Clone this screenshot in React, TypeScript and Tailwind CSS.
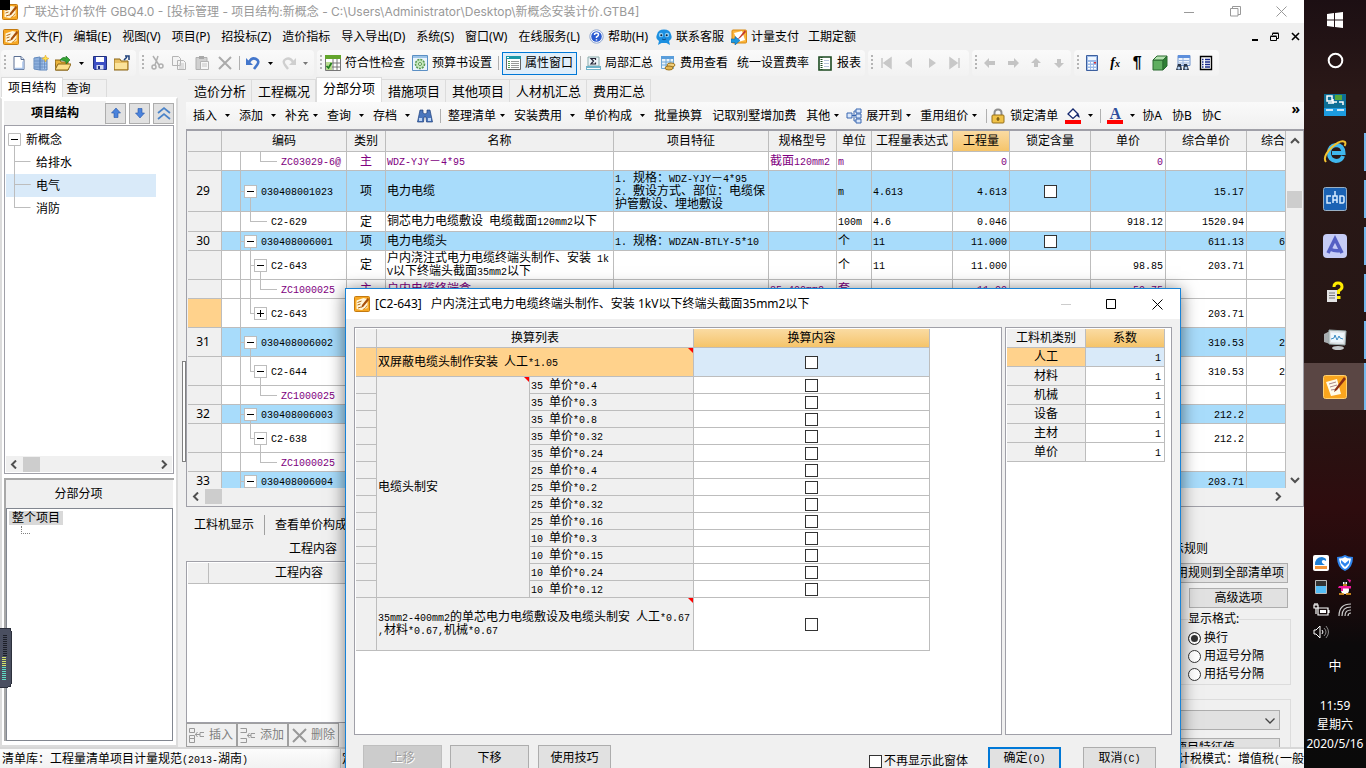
import type { ReactNode } from 'react'

const CHECK = 'appearance-none shrink-0 size-[13px] border border-[#333] bg-white block'
const MONO = "font-['Liberation_Mono','Noto_Sans_CJK_SC',monospace] text-[10px] leading-none"

export default function App() {
  return (
    <div className="relative flex h-screen w-full overflow-hidden bg-[#f0f0f0] text-xs leading-4 text-black font-['Noto_Sans','Noto_Sans_CJK_SC',sans-serif] whitespace-nowrap">
      <div className="flex min-w-0 flex-1 flex-col">
        <TitleBar />
        <MenuBar />
        <MainToolbar />
        <div className="flex min-h-0 flex-1">
          <ProjectPanel />
          <div className="flex w-2 shrink-0 items-center justify-end pb-[2px]">
            <div className="h-[101px] w-1 border border-[#808080] bg-white" />
          </div>
          <main className="flex min-w-0 flex-1 flex-col">
            <Tabs />
            <EditToolbar />
            <BillTable />
            <DetailPanel />
          </main>
        </div>
        <StatusBar />
      </div>
      <Taskbar />
      <ConversionDialog />
      <Meter />
      <div className="absolute left-0 top-0 size-[10px] bg-black" />
    </div>
  )
}

function TitleBar() {
  return (
    <header className="flex h-[23px] shrink-0 items-center bg-white pl-[2px] text-[#999]">
      <AppIcon />
      <h1 className="ml-[5px] flex-1 font-['Inter','Noto_Sans_CJK_SC',sans-serif]">广联达计价软件 GBQ4.0 - [投标管理 - 项目结构:新概念 - C:\Users\Administrator\Desktop\新概念安装计价.GTB4]</h1>
      <button aria-label="最小化" className="flex w-[46px] justify-center"><svg width="10" height="10" stroke="#999"><path d="M0 5.5h10" /></svg></button>
      <button aria-label="还原" className="flex w-[46px] justify-center"><svg width="11" height="11" fill="none" stroke="#999"><path d="M.5 2.5h7.5v7.500h-7.500zM2.500 2.500v-2h8v8h-2.500" /></svg></button>
      <button aria-label="关闭" className="flex w-[46px] justify-center"><svg width="11" height="11" stroke="#999"><path d="M.5.5l10 10M10.500.5l-10 10" /></svg></button>
    </header>
  )
}

function MenuBar() {
  return (
    <nav className="flex h-[27px] shrink-0 items-center gap-[11px] pl-[3px]">
      <span className="-mr-[5px]"><AppIcon /></span>
      {['文件(F)', '编辑(E)', '视图(V)', '项目(P)', '招投标(Z)', '造价指标', '导入导出(D)', '系统(S)', '窗口(W)', '在线服务(L)'].map(m => (
        <button key={m}>{m}</button>
      ))}
      <button className="-ml-[2px] flex items-center gap-1">
        <svg width="15" height="15" viewBox="0 0 15 15"><circle cx="7.500" cy="7.500" r="6.700" fill="#fff" stroke="#8fa6cf" /><circle cx="7.500" cy="7.500" r="5.300" fill="#2b5bd0" /><path d="M5.500 6q0-2 2-2t2 1.700q0 1.300-2 2.300v1M7.500 10.200v1.400" stroke="#fff" strokeWidth="1.500" fill="none" /></svg>
        帮助(H)
      </button>
      <button className="-ml-[3px] flex items-center gap-1">
        <svg width="16" height="16" viewBox="0 0 16 16"><path d="M3 12Q-1 10 1 5.500 2 .5 8 .5t7 5Q17 10 13 12l1 4-3.500-2h-5L2 16z" fill="#1b8fe0" /><circle cx="5" cy="6" r="2.200" fill="#8fd0f8" /><circle cx="11" cy="6" r="2.200" fill="#8fd0f8" /><circle cx="5.300" cy="6.200" r="1" fill="#123" /><circle cx="10.700" cy="6.200" r="1" fill="#123" /><path d="M6 10q2 1.500 4 0" stroke="#0b4f8c" fill="none" /></svg>
        联系客服
      </button>
      <button className="-ml-1 flex items-center gap-1">
        <svg width="16" height="16" viewBox="0 0 16 16"><rect x="1" y="1" width="14.500" height="13" rx="1" fill="#fbb53c" stroke="#d98a12" /><path d="M3 4l8-2 3 9-7 2z" fill="#fff" /><path d="M14 1L8 8.500l-2 2 3-1.500L15 3z" fill="#c2382b" /><path d="M0 10h4V7.500l5 4-5 4.500v-2.500H0z" fill="#1c98e0" stroke="#0c63a8" strokeWidth=".6" /></svg>
        计量支付
      </button>
      <button className="-ml-[2px]">工期定额</button>
      <div className="ml-auto flex items-center gap-[11px] pr-1">
        <button aria-label="子窗口最小化"><svg width="7" height="10"><path d="M0 7h6v2H0z" /></svg></button>
        <button aria-label="子窗口还原"><svg width="10" height="10" fill="none" stroke="#000"><path d="M2.500 3V1.500h6v5H7M.5 4.500h6v4h-6zM2.500 1h6M.5 4h6" /></svg></button>
        <button aria-label="子窗口关闭"><svg width="9" height="9" stroke="#000" strokeWidth="1.600"><path d="M1 1l7 7M8 1L1 8" /></svg></button>
      </div>
    </nav>
  )
}

function Group({ children }: { children: ReactNode }) {
  return (
    <div className="flex h-[26px] items-center rounded-sm bg-gradient-to-b from-[#fafafa] to-[#f2f2f2] pl-[3px]">
      <svg width="3" height="16" className="mr-1" fill="#b4b4b4"><path d="M0 0h2v2H0zM0 4h2v2H0zM0 8h2v2H0zM0 12h2v2H0z" /></svg>
      {children}
    </div>
  )
}

function Caret({ gray }: { gray?: boolean }) {
  return <svg width="6" height="3" className="shrink-0" fill={gray ? '#777' : '#000'}><path d="M0 0h5L2.500 3z" /></svg>
}

function Sep() {
  return <div className="h-[14px] w-px shrink-0 bg-[#b0b0b0]" />
}

function IconButton({ label, children }: { label: string; children: ReactNode }) {
  return (
    <button aria-label={label} className="flex size-4 shrink-0 items-center justify-center">
      <svg width="16" height="16" viewBox="0 0 16 16">{children}</svg>
    </button>
  )
}

function MainToolbar() {
  return (
    <div className="flex h-[27px] shrink-0 items-center gap-[3px] pl-[1px] pb-[1px]">
      <Group>
        <IconButton label="新建"><path d="M3 1.500h7l3 3v10H3z" fill="#fff" stroke="#5b6f93" /><path d="M4 13.500h8v-7" stroke="#a9c4ea" fill="none" strokeWidth="1.500" /><path d="M10 1.500v3h3" fill="#dce8f8" stroke="#5b6f93" /></IconButton>
        <div className="w-[6px]" />
        <IconButton label="新建项目"><path d="M1 3l6-1v13l-6-1zM7 3h7v12H7z" fill="#a8c6ee" stroke="#5e86bb" /><path d="M3 3v11M5 3v11M9 4v10M11.500 4v10M1 6h13M1 9h13M1 12h13" stroke="#5e86bb" strokeWidth=".7" /><path d="M12.500 0l1 2.500L16 3.500l-2.500 1-1 2.500-1-2.500-2.500-1 2.500-1z" fill="#ffe24a" stroke="#e8a92a" strokeWidth=".6" /></IconButton>
        <div className="w-[6px]" />
        <IconButton label="打开"><path d="M0 5h5l1 2h7v8H1z" fill="#e9b33b" stroke="#8a6414" /><path d="M3 9h13l-3 6H0z" fill="#fde08a" stroke="#8a6414" /><path d="M5 5q3-4 6-2V1l4 4-4 4V6.500Q8 5 5 5z" fill="#35a636" stroke="#176b1a" strokeWidth=".6" /></IconButton>
        <span className="flex w-[21px] justify-center"><Caret /></span>
        <IconButton label="保存"><path d="M1.500 1.500h13v13h-12l-1-1z" fill="#3c4fc4" stroke="#20307f" /><path d="M4 2h8v5H4z" fill="#fff" /><path d="M4.500 10h7v4.500h-7z" fill="#d6dcf0" /><path d="M6 11h2v3H6z" fill="#20307f" /></IconButton>
        <div className="w-[6px]" />
        <IconButton label="关闭项目"><path d="M0 4h6l1 2h7v9H0z" fill="#e9c063" stroke="#8a6414" /><path d="M1 8h12v6H1z" fill="#fbe39a" /><path d="M10 5l3-3M11 1h4v4" stroke="#1d3f7a" strokeWidth="1.500" fill="none" /></IconButton>
        <div className="w-[6px]" />
      </Group>
      <Group>
        <IconButton label="剪切"><path d="M4 1l6 9M9 1L6 10" stroke="#b0b0b0" strokeWidth="1.500" /><g fill="none" stroke="#b0b0b0" strokeWidth="1.500"><circle cx="5" cy="12" r="2" /><circle cx="12" cy="11" r="2" /></g></IconButton>
        <div className="w-[6px]" />
        <IconButton label="复制"><path d="M1.500 1.500h6l2 2v7h-8zM6.500 5.500h6l2 2v7h-8z" fill="#f4f4f4" stroke="#b4b4b4" /><path d="M8 9h5M8 11h5M8 13h5" stroke="#c4c4c4" /></IconButton>
        <div className="w-[7px]" />
        <IconButton label="粘贴"><path d="M2 2.500h11v12H2z" fill="#d0d0d0" stroke="#b0b0b0" /><path d="M5 1h5v3H5z" fill="#a8a8a8" /><path d="M6.500 6.500h8v8h-8z" fill="#f6f6f6" stroke="#b4b4b4" /><path d="M8 9h5M8 11h5" stroke="#c4c4c4" /></IconButton>
        <div className="w-[7px]" />
        <IconButton label="删除"><path d="M2 2l12 12M14 2L2 14" stroke="#ababab" strokeWidth="2" /></IconButton>
        <div className="w-[6px]" />
        <Sep />
        <div className="w-[5px]" />
        <IconButton label="撤销"><path d="M4 7q3-5 7-3t1 6-3 4" stroke="#4477cc" strokeWidth="2.600" fill="none" /><path d="M1 3v7h7z" fill="#4477cc" /></IconButton>
        <span className="flex w-[20px] justify-center"><Caret /></span>
        <IconButton label="重做"><path d="M12 7Q9 2 5 4t-1 6 3 4" stroke="#cfcfcf" strokeWidth="2.400" fill="none" /><path d="M15 3v7H8z" fill="#cfcfcf" /></IconButton>
        <span className="flex w-[17px] justify-center"><Caret gray /></span>
      </Group>
      <Group>
        <button className="-ml-[2px] flex items-center gap-1">
          <svg width="16" height="16"><path d="M.5 .5h15v15H.5z" fill="#fff" stroke="#777" /><path d="M0 0h16v4H0z" fill="#63a52c" /><path d="M1 8h15M1 12h15M8 4v12M12 4v12" stroke="#777" /><path d="M1 7h6v8H1z" fill="#b9dc90" /><path d="M1.500 11l2 2 3-5" stroke="#1b7a1b" strokeWidth="1.700" fill="none" /></svg>
          符合性检查
        </button>
        <button className="ml-[7px] flex items-center gap-1">
          <svg width="16" height="16"><path d="M.5.5h15v15H.5z" fill="#eaf4fc" stroke="#5b8fc4" /><path d="M1 1h14v2H1z" fill="#9cc4e8" /><circle cx="8" cy="9" r="4.500" fill="#c8e8c0" stroke="#5a9a50" strokeDasharray="2 1" strokeWidth="1.600" /><circle cx="8" cy="9" r="1.500" fill="#fff" stroke="#5a9a50" /></svg>
          预算书设置
        </button>
        <div className="w-[6px]" />
        <Sep />
        <button className="ml-[3px] flex h-[23px] items-center gap-1 border border-[#0078d7] bg-[#e0eefa] px-[3px]">
          <svg width="15" height="14"><path d="M.5.500h14v13H.5z" fill="#fff" stroke="#666" /><path d="M0 0h15v3H0z" fill="#1b98a8" /><path d="M1 1h2v1H1z" fill="#fff" /><path d="M2 5.500h2M2 7.500h2M2 9.500h2M2 11.500h2" stroke="#4d9e4d" /><path d="M5 5.500h8M5 7.500h8M5 9.500h8M5 11.500h8" stroke="#999" /></svg>
          属性窗口
        </button>
        <div className="w-[3px]" />
        <Sep />
        <button className="ml-[5px] flex items-center gap-1">
          <svg width="15" height="14"><path d="M2 1h11v9H2z" fill="#eef4f8" stroke="#8aa" /><path d="M0 10h15v4H0z" fill="#6fb2c8" /><path d="M1 12.500h13" stroke="#fff" /><path d="M9.500 4V2.500H5L7.500 5 5 8h4.500V6.500" stroke="#223" fill="none" strokeWidth="1.200" /></svg>
          局部汇总
        </button>
        <button className="ml-[8px] flex items-center gap-1">
          <svg width="15" height="15"><path d="M.5.500h12v12H.5z" fill="#e9f3fb" stroke="#6da6d6" /><path d="M0 0h13v3H0z" fill="#5a9edb" /><path d="M1 6h11M1 9h11M5 3v10M9 3v10" stroke="#6da6d6" /><ellipse cx="10" cy="9" rx="4" ry="2" fill="#f0cf7c" stroke="#9e7420" /><ellipse cx="8" cy="12" rx="4" ry="2" fill="#e3b550" stroke="#9e7420" /></svg>
          费用查看
        </button>
        <button className="ml-[9px]">统一设置费率</button>
        <button className="ml-[9px] mr-[4px] flex items-center gap-[5px]">
          <svg width="14" height="15"><path d="M1 1h12v13H1z" fill="#fff" stroke="#1c4a20" strokeWidth="1.600" /><path d="M3.500 1v13" stroke="#1c4a20" strokeDasharray="1 1" strokeWidth="2" /><path d="M6 4.500h5M6 7.500h5M6 10.500h5" stroke="#b8c4dc" /></svg>
          报表
        </button>
      </Group>
      <Group>
        <IconButton label="首条"><path d="M4 3v10M13 3v10L6 8z" fill="#c8c8c8" stroke="#c8c8c8" strokeWidth="1.500" /></IconButton>
        <div className="w-[7px]" />
        <IconButton label="上一条"><path d="M11 3v10L4 8z" fill="#c8c8c8" /></IconButton>
        <div className="w-[7px]" />
        <IconButton label="下一条"><path d="M5 3v10l7-5z" fill="#c8c8c8" /></IconButton>
        <div className="w-[7px]" />
        <IconButton label="末条"><path d="M12 3v10M3 3v10l7-5z" fill="#c8c8c8" stroke="#c8c8c8" strokeWidth="1.500" /></IconButton>
        <div className="w-[6px]" />
      </Group>
      <Group>
        <IconButton label="左移"><path d="M2 8l5-5v3h6v4H7v3z" fill="#c4c4c4" /></IconButton>
        <div className="w-[7px]" />
        <IconButton label="右移"><path d="M14 8L9 3v3H3v4h6v3z" fill="#c4c4c4" /></IconButton>
        <div className="w-[7px]" />
        <IconButton label="上移一行"><path d="M8 3l5 5h-3v4H6V8H3z" fill="#c4c4c4" /></IconButton>
        <div className="w-[7px]" />
        <IconButton label="下移一行"><path d="M8 13l5-5h-3V4H6v4H3z" fill="#c4c4c4" /></IconButton>
        <div className="w-[4px]" />
      </Group>
      <Group>
        <IconButton label="计算器"><path d="M2.500.5h11v15h-11z" fill="#9dbbe8" stroke="#3c5f9e" /><path d="M4 2h8v3H4z" fill="#eef6ff" /><g fill="#fff"><path d="M4 7h2v1.500H4zM7 7h2v1.500H7zM4 10h2v1.500H4zM7 10h2v1.500H7zM4 13h2v1.500H4zM7 13h2v1.500H7zM10 10h2v1.500h-2zM10 13h2v1.500h-2z" /></g><path d="M10 7h2v1.500h-2z" fill="#e03030" /></IconButton>
        <div className="w-[7px]" />
        <button aria-label="函数" className="w-4 text-center text-sm font-bold italic font-['Liberation_Serif',serif]">f<span className="text-[10px]">x</span></button>
        <div className="w-[6px]" />
        <button aria-label="段落" className="w-4 text-center text-base font-bold font-['Liberation_Sans',sans-serif]">¶</button>
        <div className="w-[7px]" />
        <IconButton label="立方体"><path d="M1 5h10v10H1z" fill="#5fae60" stroke="#2b6b30" /><path d="M1 5l4-4h10l-4 4z" fill="#b4e2b0" stroke="#2b6b30" /><path d="M11 5l4-4v10l-4 4z" fill="#2f7f36" stroke="#2b6b30" /></IconButton>
        <div className="w-[7px]" />
        <IconButton label="查找"><path d="M3 .5h12v10H3z" fill="#eef4fc" stroke="#6b8fc9" /><path d="M3 0h12v3H3z" fill="#5d8fdc" /><path d="M4 5.500h10M4 8h10M8 3v7" stroke="#9ab4dd" /><path d="M3 9h3l1 6H1zM9 9h3l2 6H8z" fill="#273449" /><circle cx="3.800" cy="13" r="1.500" fill="#b8d4f4" /><circle cx="11" cy="13" r="1.500" fill="#b8d4f4" /></IconButton>
        <div className="w-[7px]" />
        <IconButton label="列表"><path d="M2.500 1.500h11v13h-11z" fill="#fff" stroke="#000" strokeWidth="1.400" /><path d="M4 4.500h1.500M7 4.500h5M4 7h1.500M7 7h5M4 9.500h1.500M7 9.500h5M4 12h1.500M7 12h5" stroke="#1a2a8c" strokeWidth="1.400" /></IconButton>
        <div className="w-[5px]" />
      </Group>
    </div>
  )
}

function ProjectPanel() {
  return (
    <aside className="flex w-[178px] shrink-0 flex-col">
      <div className="flex h-5 items-end pl-px">
        <button className="h-5 w-[62px] border border-b-0 border-[#dcdcdc] bg-white">项目结构</button>
        <button className="h-[18px] w-11 border border-b-0 border-l-0 border-[#dcdcdc] pr-3">查询</button>
      </div>
      <div className="flex min-h-0 flex-1 flex-col border-2 border-[#dcdcdc] border-t-white bg-white px-[2px] pb-1">
        <div className="flex h-[26px] shrink-0 items-center gap-[3px] pt-[2px]">
          <h2 className="flex h-full flex-1 items-center justify-center bg-[#f0f0f0] font-bold">项目结构</h2>
          <button aria-label="上移节点" className="-ml-1 flex size-[21px] items-center justify-center border border-[#adadad] bg-[#e1e1e1]"><svg width="10" height="10"><path d="M5 0l4.500 5H7v4.500H3V5H.5z" fill="#4b83dc" stroke="#2756a8" strokeWidth=".6" /></svg></button>
          <button aria-label="下移节点" className="flex size-[21px] items-center justify-center border border-[#adadad] bg-[#e1e1e1]"><svg width="10" height="10"><path d="M5 10L.5 5H3V.5h4V5h2.500z" fill="#4b83dc" stroke="#2756a8" strokeWidth=".6" /></svg></button>
          <button aria-label="收起" className="flex size-[21px] items-center justify-center border border-[#adadad] bg-[#e1e1e1]"><svg width="14" height="14" fill="none" stroke="#4a83c8" strokeWidth="1.700"><path d="M1 7l6-5 6 5M1 13l6-5 6 5" /></svg></button>
        </div>
        <div className="flex min-h-0 flex-[350] flex-col border border-[#a0a0a8] p-px">
          <ul className="relative flex-1 pt-px leading-[23px]">
            <svg width="30" height="84" className="absolute left-0 top-0" fill="none" stroke="#bdbdbd"><path d="M8.500 19v62M8.500 34.500h16M8.500 57.500h16M8.500 80.500h16" /><path d="M2.500 6.500h12v12h-12z" fill="#fff" /><path d="M5 12.500h7" stroke="#000" /></svg>
            <li className="pl-5">新概念</li>
            <li className="pl-[30px]">给排水</li>
            <li className="mr-4 bg-[#d9eaf9] pl-[30px]">电气</li>
            <li className="pl-[30px]">消防</li>
            <svg width="30" height="84" className="absolute left-0 top-0" stroke="#bdbdbd"><path d="M8.500 46v26M8.500 57.500h16" /></svg>
          </ul>
          <HScroll />
        </div>
        <div className="mt-1 flex min-h-0 flex-[264] flex-col border-l-2 border-t-2 border-[#a8a8a8] pr-px">
          <h2 className="shrink-0 bg-[#f0f0f0] pr-[22px] text-center leading-7">分部分项</h2>
          <div className="flex-1 border border-[#828790] px-[2px] py-px">
            <span className="inline-block bg-[#d9d9d9] px-[3px] leading-[14px]">整个项目</span>
            <div className="ml-3 h-2 w-[9px] border-b border-l border-dotted border-[#808080]" />
          </div>
        </div>
      </div>
    </aside>
  )
}

function HScroll() {
  return (
    <div className="flex h-4 shrink-0 items-center bg-[#f0f0f0]">
      <svg width="17" height="9" fill="none" stroke="#505050" strokeWidth="2"><path d="M10 .5l-4 4 4 4" /></svg>
      <div className="h-[15px] w-[17px] bg-[#cdcdcd]" />
      <svg width="17" height="9" className="ml-auto" fill="none" stroke="#505050" strokeWidth="2"><path d="M7 .5l4 4-4 4" /></svg>
    </div>
  )
}

function Tabs() {
  const tabs = ['造价分析', '工程概况', '分部分项', '措施项目', '其他项目', '人材机汇总', '费用汇总']
  return (
    <div className="flex h-[25px] shrink-0 items-end pl-[2px] text-[13px]">
      {tabs.map(t => (
        <button key={t} className={t === '分部分项' ? 'h-[25px] border border-b-0 border-[#dcdcdc] bg-white px-[6px] pb-1' : 'h-[23px] border-r border-t border-[#dcdcdc] px-[5px] pl-[6px]'}>{t}</button>
      ))}
    </div>
  )
}

function Cmd({ label, wide }: { label: string; wide?: boolean }) {
  return (
    <button className="flex shrink-0 items-center">
      {label}
      <span className={wide ? 'flex w-[22px] justify-center' : 'flex w-[18px] justify-center pr-1'}><Caret /></span>
    </button>
  )
}

function EditToolbar() {
  return (
    <div className="flex h-[27px] shrink-0 items-center bg-gradient-to-b from-[#fafafa] to-[#f0f0f0] pl-[7px]">
      <Cmd label="插入" wide />
      <Cmd label="添加" wide />
      <Cmd label="补充" />
      <Cmd label="查询" wide />
      <Cmd label="存档" wide />
      <span className="-ml-[2px]"><IconButton label="查找"><path d="M3 2h3v3l2 1 2-1V2h3l2.500 12h-6L9 9H7l-.5 5h-6z" fill="#4a76bd" stroke="#1f3f7a" strokeWidth=".7" /><path d="M2 10h3v3H2zM11 10h3v3h-3z" fill="#bcd4f4" /></IconButton></span>
      <div className="w-[7px]" />
      <Sep />
      <div className="w-[7px]" />
      <Cmd label="整理清单" />
      <Cmd label="安装费用" wide />
      <Cmd label="单价构成" wide />
      <button>批量换算</button>
      <button className="mx-[10px]">记取别墅增加费</button>
      <Cmd label="其他" />
      <span className="mr-1 -ml-[2px]"><IconButton label="层级"><path d="M1 5h5v5H1zM10 1h5v4h-5zM10 6h5v4h-5zM10 11h5v4h-5z" fill="#dbe8fb" stroke="#3966b0" /><path d="M6 7.500h4M8 3v10h2M8 3h2" stroke="#3966b0" fill="none" /></IconButton></span>
      <Cmd label="展开到" />
      <Cmd label="重用组价" />
      <Sep />
      <button className="ml-1 flex shrink-0 items-center gap-[5px]">
        <svg width="14" height="16"><path d="M3.500 8V5q0-3.500 3.500-3.500T10.500 5v3" fill="none" stroke="#8f8f8f" strokeWidth="2" /><rect x="1" y="7" width="12" height="8" rx="1" fill="#f0c248" stroke="#96701a" /><path d="M7 9v4M5.500 11h3" stroke="#7a5a10" strokeWidth="1.400" /></svg>
        锁定清单
      </button>
      <span className="ml-[7px]"><IconButton label="填充颜色"><path d="M3 6l5-5 5 5-5 4.500z" fill="#fff" stroke="#14286e" strokeWidth="1.300" /><path d="M12 5q3 2 2.500 5L12 8z" fill="#14286e" /><path d="M0 12h16v4H0z" fill="#f00" /></IconButton></span>
      <span className="flex w-[19px] shrink-0 justify-center"><Caret /></span>
      <Sep />
      <button aria-label="字体颜色" className="ml-[6px] h-4 w-4 shrink-0 border-b-4 border-[#f00] text-center text-base leading-[11px] font-bold text-[#2f4f9e] font-['Liberation_Serif',serif]">A</button>
      <span className="flex w-[19px] shrink-0 justify-center"><Caret /></span>
      <button className="mr-[10px]">协A</button>
      <button className="mr-[10px]">协B</button>
      <button>协C</button>
      <button className="ml-auto self-start pr-1 text-sm leading-[13px] font-bold">»</button>
    </div>
  )
}

type Row = {
  n?: string
  h: string
  code: string
  level: 1 | 2 | 3
  open?: '-' | '+'
  more?: boolean
  sel?: boolean
  cells: string[]
}

// cells: 类别 名称 项目特征 规格型号 单位 工程量表达式 工程量 锁定含量 单价 综合单价 综合合价
const rows: Row[] = [
  { h: 'h-[19px]', code: 'ZC03029-6@', level: 3, cells: ['主', 'WDZ-YJY－4*95', '', '截面120mm2', 'm', '', '0', '', '0', '', ''] },
  { n: '29', h: 'h-[41px]', code: '030408001023', level: 1, open: '-', cells: ['项', '电力电缆', '1. 规格：WDZ-YJY－4*95\n2. 敷设方式、部位：电缆保\n护管敷设、埋地敷设', '', 'm', '4.613', '4.613', 'x', '', '15.17', ''] },
  { h: 'h-[20px]', code: 'C2-629', level: 2, cells: ['定', '铜芯电力电缆敷设 电缆截面120mm2以下', '', '', '100m', '4.6', '0.046', '', '918.12', '1520.94', ''] },
  { n: '30', h: 'h-[19px]', code: '030408006001', level: 1, open: '-', cells: ['项', '电力电缆头', '1. 规格：WDZAN-BTLY-5*10', '', '个', '11', '11.000', 'x', '', '611.13', '6'] },
  { h: 'h-[29px]', code: 'C2-643', level: 2, open: '-', more: true, cells: ['定', '户内浇注式电力电缆终端头制作、安装 1k\nV以下终端头截面35mm2以下', '', '', '个', '11', '11.000', '', '98.85', '203.71', ''] },
  { h: 'h-[19px]', code: 'ZC1000025', level: 3, more: true, cells: ['主', '户内电缆终端盒', '', '35~400mm2', '套', '', '11.00', '', '59.75', '', ''] },
  { h: 'h-[29px]', code: 'C2-643', level: 2, open: '+', sel: true, cells: ['', '', '', '', '', '', '', '', '', '203.71', ''] },
  { n: '31', h: 'h-[29px]', code: '030408006002', level: 1, open: '-', cells: ['', '', '', '', '', '', '', '', '', '310.53', '2'] },
  { h: 'h-[29px]', code: 'C2-644', level: 2, open: '-', cells: ['', '', '', '', '', '', '', '', '', '310.53', '2'] },
  { h: 'h-[19px]', code: 'ZC1000025', level: 3, cells: ['', '', '', '', '', '', '', '', '', '', ''] },
  { n: '32', h: 'h-[19px]', code: '030408006003', level: 1, open: '-', cells: ['', '', '', '', '', '', '', '', '', '212.2', ''] },
  { h: 'h-[29px]', code: 'C2-638', level: 2, open: '-', cells: ['', '', '', '', '', '', '', '', '', '212.2', ''] },
  { h: 'h-[19px]', code: 'ZC1000025', level: 3, cells: ['', '', '', '', '', '', '', '', '', '', ''] },
  { n: '33', h: 'h-[19px]', code: '030408006004', level: 1, open: '-', cells: ['', '', '', '', '', '', '', '', '', '203.71', ''] },
]

const aligns = ['text-center', 'pl-px', 'pl-px', 'pl-px', 'pl-px', 'pl-px', 'pr-[2px] text-right', '', 'pr-[2px] text-right', 'pr-[2px] text-right', 'text-right']

// half-width runs are set in a 6px wide mono face, so that two of them take one han cell
function Mixed({ text }: { text: string }) {
  return (
    <>
      {text.split(/([ -~]+)/).map((part, i) => (
        i % 2 ? <span key={i} className={MONO}>{part}</span> : part
      ))}
    </>
  )
}

function TreeLines({ row }: { row: Row }) {
  const x = row.level === 1 ? 28 : 38
  const stem = row.level === 1 ? 18 : row.level === 2 ? 28 : 38
  return (
    <svg className="absolute inset-0 h-full w-full" stroke="#bdbdbd" shapeRendering="crispEdges">
      <line x1="18.500" y1="0" x2="18.500" y2="100%" />
      {row.level === 3 && row.more && <line x1="28.500" y1="0" x2="28.500" y2="100%" />}
      {row.level > 1 && <line x1={stem + 0.5} y1="0" x2={stem + 0.5} y2={row.more && row.level === 2 ? '100%' : '50%'} />}
      <line x1={stem} y1="50%" x2={row.open ? x - 4 : stem + 17} y2="50%" />
      {row.open === '-' && <line x1={x + 0.5} y1="50%" x2={x + 0.5} y2="100%" />}
      {row.open && (
        <svg x={x - 6} y="50%" width="14" height="14" overflow="visible">
          <rect x=".5" y="-6" width="12" height="12" fill="#fff" />
          <path d={row.open === '+' ? 'M3 0h7M6.500 -3.500v7' : 'M3 0h7'} stroke="#000" />
        </svg>
      )}
    </svg>
  )
}

function BillTable() {
  const heads = ['', '编码', '类别', '名称', '项目特征', '规格型号', '单位', '工程量表达式', '工程量', '锁定含量', '单价', '综合单价', '综合']
  return (
    <section className="flex min-h-0 flex-[377] border border-t-2 border-[#a0a0a8] bg-[#f0f0f0] pl-px font-['Liberation_Sans','Noto_Sans_CJK_SC',sans-serif]">
      <div className="flex min-w-0 flex-1 flex-col">
        <div className="min-h-0 flex-1 overflow-hidden bg-white">
          <table className="w-[1098px] table-fixed border-separate border-spacing-0 leading-3">
            <colgroup>
              <col className="w-[34px]" /><col className="w-[125px]" /><col className="w-[39px]" /><col className="w-[228px]" />
              <col className="w-[155px]" /><col className="w-[68px]" /><col className="w-[35px]" /><col className="w-[81px]" />
              <col className="w-[57px]" /><col className="w-[81px]" /><col className="w-[75px]" /><col className="w-[81px]" /><col className="w-[39px]" />
            </colgroup>
            <thead>
              <tr className="h-[21px]">
                {heads.map((h, i) => (
                  <th key={i} className={`border-b border-r border-[#bdbdbd] p-0 font-normal ${h === '工程量' ? 'bg-gradient-to-b from-[#fadba2] to-[#f5c469]' : 'bg-[#f0f0f0]'} ${i === 12 ? 'text-right' : ''}`}>{h}</th>
                ))}
              </tr>
            </thead>
            <tbody>
              {rows.map((r, i) => (
                <tr key={i} className={`${r.h} ${r.level === 1 ? 'bg-[#a8dcfb]' : 'bg-white'} ${r.level === 3 ? 'text-[#800080]' : ''}`}>
                  <td className={`border-b border-r border-[#bdbdbd] p-0 pr-[3px] text-center font-['Noto_Sans',sans-serif] ${r.sel ? 'bg-[#ffd28c]' : 'bg-[#f0f0f0]'}`}>{r.n}</td>
                  <td className="relative border-b border-r border-[#bdbdbd] p-0">
                    <TreeLines row={r} />
                    <span className={`relative ${MONO} ${r.level === 1 ? 'ml-[39px]' : r.level === 2 ? 'ml-[49px]' : 'ml-[59px]'}`}>{r.code}</span>
                  </td>
                  {r.cells.map((c, k) => (
                    <td key={k} className={`overflow-hidden whitespace-pre border-b border-r border-[#bdbdbd] p-0 ${aligns[k]}`}>
                      {c === 'x' ? <input type="checkbox" aria-label="锁定含量" className={`${CHECK} mx-auto`} /> : <Mixed text={c} />}
                    </td>
                  ))}
                </tr>
              ))}
            </tbody>
          </table>
        </div>
        <HScroll />
        <div className="h-[2px]" />
      </div>
      <div className="flex w-[17px] flex-col items-center pb-[22px] pt-[6px]">
        <svg width="10" height="7" fill="none" stroke="#505050" strokeWidth="2"><path d="M1 6l4-4 4 4" /></svg>
        <div className="mt-[47px] h-[17px] w-[15px] bg-[#cdcdcd]" />
        <svg width="10" height="7" className="mt-auto" fill="none" stroke="#505050" strokeWidth="2"><path d="M1 1l4 4 4-4" /></svg>
      </div>
    </section>
  )
}

function DetailPanel() {
  return (
    <section className="flex min-h-0 flex-[241]">
      <div className="flex min-w-0 flex-1 flex-col">
        <div className="flex items-center pl-2 pt-[8px]">
          <button>工料机显示</button>
          <div className="mx-[10px] h-5 w-px bg-[#a0a0a0]" />
          <button>查看单价构成</button>
        </div>
        <h3 className="pl-[103px] pt-[6px] leading-4">工程内容</h3>
        <div className="mt-1 flex min-h-0 flex-1 flex-col border border-[#a0a0a8] bg-white p-px">
          <div className="flex h-[21px] border-b border-[#bdbdbd] bg-[#f0f0f0] leading-5">
            <div className="w-[21px] border-r border-[#bdbdbd]" />
            <div className="pl-[66px]">工程内容</div>
          </div>
        </div>
        <div className="flex h-6 text-[#808080]">
          <button disabled className="flex w-[51px] items-center gap-1 border border-[#a0a0a0] pl-[2px]"><svg width="16" height="15" className="shrink-0" fill="none" stroke="#999"><path d="M.5.5h5v4h-5zM.5 7.500h5v3h-5zM.5 10.500h5v4h-5zM15 4.500h-4v4h4M6 6.500h5M8.500 4l-2 2.500 2 2.500" /></svg>插入</button>
          <button disabled className="flex w-[51px] items-center gap-1 border border-[#a0a0a0] pl-[2px]"><svg width="16" height="15" className="shrink-0" fill="none" stroke="#999"><path d="M.5.5h6v4h-6M.5 10.500h6v4h-6M15 5.500h-4v4h4M7 7.500h4M9.500 5l-2 2.500 2 2.500" /></svg>添加</button>
          <button disabled className="flex w-[51px] items-center gap-1 border border-[#a0a0a0] pl-[3px]"><svg width="15" height="15" className="shrink-0" stroke="#999" strokeWidth="2"><path d="M1 1l13 13M14 1L1 14" /></svg>删除</button>
        </div>
      </div>
      <div className="flex w-[150px] shrink-0 flex-col pr-4 pt-[34px]">
        <h3 className="pr-[80px] text-right">显示规则</h3>
        <button className="mt-[6px] h-5 self-end border border-[#adadad] bg-[#e1e1e1] px-[3px]">应用规则到全部清单项</button>
        <button className="mt-[5px] h-5 w-[99px] self-end border border-[#adadad] bg-[#e1e1e1]">高级选项</button>
        <fieldset className="-mr-[3px] mt-[3px] h-[74px] border border-[#dcdcdc] pl-[33px]">
          <legend className="px-0 leading-4">显示格式:</legend>
          {['换行', '用逗号分隔', '用括号分隔'].map((t, i) => (
            <label key={t} className="flex h-[18px] items-center gap-[3px] pt-1">
              <input type="radio" name="format" defaultChecked={i === 0} className="size-[13px] appearance-none rounded-full border border-[#333] bg-white checked:shadow-[inset_0_0_0_2px_#fff] checked:bg-[#333]" />
              {t}
            </label>
          ))}
        </fieldset>
        <div className="-mr-[3px] mt-[14px] flex min-h-0 flex-1 flex-col overflow-hidden border border-b-0 border-[#dcdcdc] pr-[10px] pt-[10px]">
          <div className="relative h-5 shrink-0 border border-[#adadad] bg-[#e1e1e1]">
            <select aria-label="选项" className="size-full appearance-none" />
            <svg width="10" height="6" className="absolute right-1 top-[7px]" fill="none" stroke="#444" strokeWidth="1.300"><path d="M.5.5L5 5 9.500.5" /></svg>
          </div>
          <button className="mt-2 h-5 shrink-0 border border-[#adadad] bg-[#e1e1e1] pr-[44px] text-right">项目特征值</button>
        </div>
      </div>
    </section>
  )
}

function StatusBar() {
  return (
    <footer className="flex h-[21px] shrink-0 items-center border-t-2 border-[#d7d7d7] bg-gradient-to-b from-[#fcfcfc] to-[#f2f2f2] pl-[2px]">
      <span className="w-[338px]"><Mixed text="清单库：工程量清单项目计量规范(2013-湖南)" /></span>
      <div className="mr-px h-full w-px bg-[#d0d0d0]" />
      <span className="flex-1">定</span>
      <span className="w-[136px] text-right"><Mixed text="计税模式：增值税(一般" /></span>
    </footer>
  )
}

const factors = ['35 单价*0.4', '35 单价*0.3', '35 单价*0.8', '35 单价*0.32', '35 单价*0.24', '25 单价*0.4', '25 单价*0.2', '25 单价*0.32', '25 单价*0.16', '10 单价*0.3', '10 单价*0.15', '10 单价*0.24', '10 单价*0.12']

function RedCorner() {
  return <svg width="5" height="5" className="absolute right-0 top-0"><path d="M0 0h5v5z" fill="#f00" /></svg>
}

function ConversionDialog() {
  const td = 'border-b border-r border-[#bdbdbd] p-0'
  const btn = 'h-[25px] border border-[#adadad] bg-[#e1e1e1]'
  return (
    <div role="dialog" aria-label="换算" className="absolute left-[345px] top-[288px] w-[836px] border border-[#1883d7] bg-[#f0f0f0] shadow-[0_2px_16px_rgba(0,0,0,0.55)]">
      <div className="flex h-[30px] items-center bg-white pl-2">
        <AppIcon />
        <h2 className="ml-[5px] flex flex-1 gap-[9px]"><span>[C2-643]</span><span>户内浇注式电力电缆终端头制作、安装 1kV以下终端头截面35mm2以下</span></h2>
        <button aria-label="最小化" disabled className="flex w-[45px] justify-center"><svg width="10" height="11" stroke="#ccc"><path d="M0 5.500h10" /></svg></button>
        <button aria-label="最大化" className="flex w-[46px] justify-center"><svg width="11" height="11" fill="none" stroke="#000"><path d="M.5.5h9v9h-9z" /></svg></button>
        <button aria-label="关闭" className="flex w-[46px] justify-center"><svg width="11" height="11" stroke="#000"><path d="M.5.5l10 10M10.500.5l-10 10" /></svg></button>
      </div>
      <div className="flex h-[416px] gap-[3px] px-2 pt-2 font-['Liberation_Sans','Noto_Sans_CJK_SC',sans-serif]">
        <div className="flex-1 border border-[#a0a0a8] bg-white p-px">
          <table className="w-[574px] table-fixed border-separate border-spacing-0 leading-3">
            <colgroup><col className="w-[21px]" /><col className="w-[153px]" /><col className="w-[164px]" /><col className="w-[236px]" /></colgroup>
            <thead>
              <tr className="h-[19px]">
                <th className={`${td} bg-[#f0f0f0]`} />
                <th colSpan={2} className={`${td} bg-[#f0f0f0] font-normal`}>换算列表</th>
                <th className={`${td} bg-gradient-to-b from-[#fadba2] to-[#f5c469] font-normal`}>换算内容</th>
              </tr>
            </thead>
            <tbody>
              <tr className="h-[29px] bg-[#ffd28c]">
                <td className={td} />
                <td colSpan={2} className={`${td} relative whitespace-pre pl-px`}><RedCorner /><Mixed text="双屏蔽电缆头制作安装 人工*1.05" /></td>
                <td className={`${td} bg-[#d9eaf9]`}><input type="checkbox" aria-label="双屏蔽电缆头制作安装" className={`${CHECK} mx-auto`} /></td>
              </tr>
              {factors.map((f, i) => (
                <tr key={f} className="h-[17px] bg-[#f0f0f0]">
                  <td className={td} />
                  {i === 0 && <td rowSpan={13} className={`${td} relative pl-px`}><RedCorner />电缆头制安</td>}
                  <td className={`${td} whitespace-pre pl-px`}><Mixed text={f} /></td>
                  <td className={`${td} bg-white`}><input type="checkbox" aria-label={f} className={`${CHECK} mx-auto`} /></td>
                </tr>
              ))}
              <tr className="h-[53px] bg-[#f0f0f0]">
                <td className={td} />
                <td colSpan={2} className={`${td} relative whitespace-pre pl-px`}><RedCorner /><Mixed text={'35mm2-400mm2的单芯电力电缆敷设及电缆头制安 人工*0.67\n,材料*0.67,机械*0.67'} /></td>
                <td className={`${td} bg-white`}><input type="checkbox" aria-label="单芯电力电缆敷设" className={`${CHECK} mx-auto`} /></td>
              </tr>
            </tbody>
          </table>
        </div>
        <div className="w-[167px] border border-[#a0a0a8] bg-white p-px">
          <table className="w-[158px] table-fixed border-separate border-spacing-0 leading-3">
            <thead>
              <tr className="h-[19px]">
                <th className={`${td} bg-[#f0f0f0] font-normal`}>工料机类别</th>
                <th className={`${td} bg-gradient-to-b from-[#fadba2] to-[#f5c469] font-normal`}>系数</th>
              </tr>
            </thead>
            <tbody>
              {['人工', '材料', '机械', '设备', '主材', '单价'].map((t, i) => (
                <tr key={t} className="h-[19px]">
                  <td className={`${td} text-center ${i === 0 ? 'bg-[#ffd28c]' : 'bg-[#f0f0f0]'}`}>{t}</td>
                  <td className={`${td} pr-[3px] text-right ${i === 0 ? 'bg-[#d9eaf9]' : ''}`}><Mixed text="1" /></td>
                </tr>
              ))}
            </tbody>
          </table>
        </div>
      </div>
      <div className="flex items-start pb-3 pl-[17px] pr-[24px] pt-[10px]">
        <button disabled className="h-[25px] w-[79px] border border-[#bfbfbf] bg-[#cccccc] text-[#a0a0a0] [text-shadow:1px_1px_0_#fff]">上移</button>
        <button className={`${btn} ml-2 w-[79px]`}>下移</button>
        <button className={`${btn} ml-[9px] w-[73px]`}>使用技巧</button>
        <label className="ml-auto flex items-center gap-[2px] pt-[8px]">
          <input type="checkbox" className={CHECK} />
          不再显示此窗体
        </label>
        <button className="ml-5 mt-[2px] h-[25px] w-[73px] border-2 border-[#0078d7] bg-[#e1e1e1] pb-1"><Mixed text="确定(O)" /></button>
        <button className={`${btn} ml-[22px] mt-[2px] w-[73px] pb-1`}><Mixed text="取消(C)" /></button>
      </div>
    </div>
  )
}

function Meter() {
  return (
    <svg width="12" height="60" className="absolute left-0 top-[628px]" shapeRendering="crispEdges">
      <rect x="-4" y="0" width="15" height="59" rx="3" fill="#4a4f60" stroke="#2c303c" />
      <path d="M5 7v22" stroke="#1d2029" strokeWidth="4" strokeDasharray="1 1" />
      <path d="M4 29v10" stroke="#d4e46a" strokeWidth="4" strokeDasharray="1 1" />
      <path d="M4 39v14" stroke="#5fdcc4" strokeWidth="4" strokeDasharray="1 1" />
    </svg>
  )
}

function TaskItem({ label, active, running, children }: { label: string; active?: boolean; running?: boolean; children: ReactNode }) {
  return (
    <button aria-label={label} className={`flex h-[47px] w-full shrink-0 items-center justify-center pl-[2px] ${active ? 'bg-[#5a4644]' : ''}`}>
      <svg width="24" height="24" viewBox="0 0 24 24" className="ml-auto">{children}</svg>
      <div className={`ml-auto w-[2px] ${active ? 'h-full' : 'h-[38px]'} ${running ? 'bg-[#76b9ed]' : ''}`} />
    </button>
  )
}

function Taskbar() {
  return (
    <aside className="flex w-[62px] shrink-0 flex-col items-center overflow-hidden bg-linear-[to_bottom,#1c0f13_0%,#2a1817_12%,#251614_50%,#2e0c0e_66%,#260b0d_72%,#0c0a0b_84%,#0a0a0a_100%] text-white">
      <button aria-label="开始" className="flex h-10 shrink-0 items-center"><svg width="16" height="16" fill="#fff"><path d="M0 2l7-1v6.500H0zM8 .9L16 0v7.500H8zM0 8.500h7V15l-7-1zM8 8.500h8V16l-8-1z" /></svg></button>
      <button aria-label="搜索" className="flex h-[41px] shrink-0 items-center"><svg width="17" height="17" fill="none" stroke="#fff" strokeWidth="2"><circle cx="8.500" cy="8.500" r="6.800" /></svg></button>
      <TaskItem label="投影">
        <path d="M1 1h22v14H1z" fill="#0d6f96" /><path d="M1 15h22v8H1z" fill="#1c9be0" /><path d="M4 3h5v5H4zM10 6v3h4M5 10h6M16 9h4v3" stroke="#fff" strokeWidth="1.500" fill="none" /><path d="M12 2h7v5h-7z" fill="#55a83a" /><path d="M3 17h7M14 17h7" stroke="#fff" strokeWidth="1.500" />
      </TaskItem>
      <TaskItem label="浏览器" running>
        <path d="M20 16q-1.500 5-7 5-7-1-7-8t7-8q7 0 7.500 8H9" fill="none" stroke="#3fb7ee" strokeWidth="4" /><path d="M3 22Q-1 17 9 7 18-1 22 2q1 2-.5 4" fill="none" stroke="#f2c230" strokeWidth="2" />
      </TaskItem>
      <TaskItem label="看图" running>
        <rect x=".5" y=".5" width="23" height="23" rx="2" fill="#1a62b4" stroke="#9ab0c4" /><path d="M8 9H4v7h4M10 16V9h4v7M10 13h4M17 9h3l1 1v5l-1 1h-3zM12 4v5" fill="none" stroke="#d8ecff" strokeWidth="1.500" />
      </TaskItem>
      <TaskItem label="绘图" running>
        <rect width="24" height="24" rx="4" fill="#c6ccf6" /><path d="M5 19L12 5l7 14M7 15q6 3 12 1" fill="none" stroke="#5560c4" strokeWidth="3.500" />
      </TaskItem>
      <TaskItem label="帮助" running>
        <path d="M4 9h10v12H4z" fill="#e4e4e4" /><path d="M6 12h6M6 14.500h6M6 17h6" stroke="#777" /><path d="M11 6q0-4 4-4t4 4q0 2-3.500 4v3" fill="none" stroke="#ffec00" strokeWidth="3" /><path d="M14 15h3.500v3H14z" fill="#ffec00" />
      </TaskItem>
      <TaskItem label="监视" running>
        <path d="M1 6l6-3v13l-6-2z" fill="#a8adb0" /><path d="M6 2l17 1-1 14-16-1z" fill="#dfe3e6" stroke="#9aa" /><path d="M8 4.500l13 .5-1 9.500-12-.5z" fill="#eef7fc" /><path d="M8 11l3-1 1-3 2 5 2-4 1 2 3 1" fill="none" stroke="#3b8cc4" /><ellipse cx="15" cy="20" rx="6" ry="2" fill="#c4c8ca" />
      </TaskItem>
      <TaskItem label="计价软件" active running>
        <rect x=".5" y=".5" width="23" height="23" rx="2" fill="#f9a51e" stroke="#ffd070" /><path d="M3 7l11-3 4 15-10 2z" fill="#fffbe8" /><path d="M6 9l7-2M7 12l7-2M8 15l6-1" stroke="#a88" /><path d="M21 2L12 14l-1 3 3-2 9-11z" fill="#8c2f12" />
      </TaskItem>
      <div className="mr-1 mt-auto grid grid-cols-2 items-center justify-items-center gap-x-[7px] gap-y-2">
        <svg width="16" height="16"><rect width="16" height="16" rx="2" fill="#fff" /><path d="M2 10Q2 2 9 2q5 1 4 4-3-2-4 0t3 4z" fill="#1e7fd8" /><path d="M2 11h12v3H2z" fill="#f3943a" /></svg>
        <svg width="16" height="16"><path d="M0 2q5 0 8-2 3 2 8 2 0 11-8 14Q0 13 0 2z" fill="#2d84ee" /><path d="M2 3.500q4 0 6-1.500 2 1.500 6 1.500Q13 12 8 14 3 12 2 3.500z" fill="#fff" /><path d="M4 5l4 3.500L12 5v3l-4 4-4-4z" fill="#2d84ee" /></svg>
        <svg width="12" height="14"><path d="M.5.5h11v13H.5z" fill="#333" stroke="#bbb" /><path d="M1 6h10v7H1z" fill="#55bdf6" /></svg>
        <svg width="16" height="16"><ellipse cx="8" cy="9" rx="6" ry="6.500" fill="#111" /><ellipse cx="8" cy="11" rx="4" ry="4" fill="#fff" /><circle cx="8" cy="4" r="3.500" fill="#111" /><path d="M6 3h1.500v2H6zM8.500 3H10v2H8.500z" fill="#fff" /><path d="M2 7h12v2.500H6V12H4V9H1zM10 0l4 1-1 3z" fill="#f0189a" /><path d="M2 15h5M9 15h5M6 6h4" stroke="#f6a623" strokeWidth="1.500" /></svg>
        <svg width="17" height="14" fill="none" stroke="#fff" strokeWidth="1.200"><path d="M5 5h10v7H5zM16 7v3M1 2h4v3H1zM2 0v2M4 0v2M3 5v6" /><path d="M7 7h6v3H7z" fill="#fff" stroke="none" /></svg>
        <svg width="14" height="14" fill="none" stroke="#ccc" strokeWidth="1.200"><path d="M1 13Q1 1 13 1M4 13q0-9 9-9M7 13q0-6 6-6M10 13q0-3 3-3" /></svg>
        <svg width="16" height="14" fill="none" stroke="#fff"><path d="M1 5h2l4-4v12L3 9H1zM9 5q2 2 0 4" /><path d="M11 3q4 4 0 8M13 1q5 6 0 12" stroke="#888" /></svg>
      </div>
      <div className="mt-4 text-[13px] leading-5">中</div>
      <div className="mb-[15px] mt-[21px] text-center leading-[19px]">
        <div>11:59</div>
        <div>星期六</div>
        <div>2020/5/16</div>
      </div>
    </aside>
  )
}

function AppIcon() {
  return (
    <svg width="16" height="16" viewBox="0 0 16 16" className="shrink-0">
      <rect x=".5" y=".5" width="15" height="15" rx="1" fill="#f7a823" stroke="#c47a10" />
      <path d="M2.500 4.500l7-2.500 4 1v9l-6 2-5-1z" fill="#fff6dc" />
      <path d="M3.500 6.500l4-1.500M3.500 9l3-1M4 12l3-1" stroke="#b06a18" />
      <path d="M14 1.500L8 9l-1 3 2.500-1.500L15 4z" fill="#a8500c" />
      <path d="M9 13.500q3-1 4-4" stroke="#d88a20" fill="none" />
    </svg>
  )
}
